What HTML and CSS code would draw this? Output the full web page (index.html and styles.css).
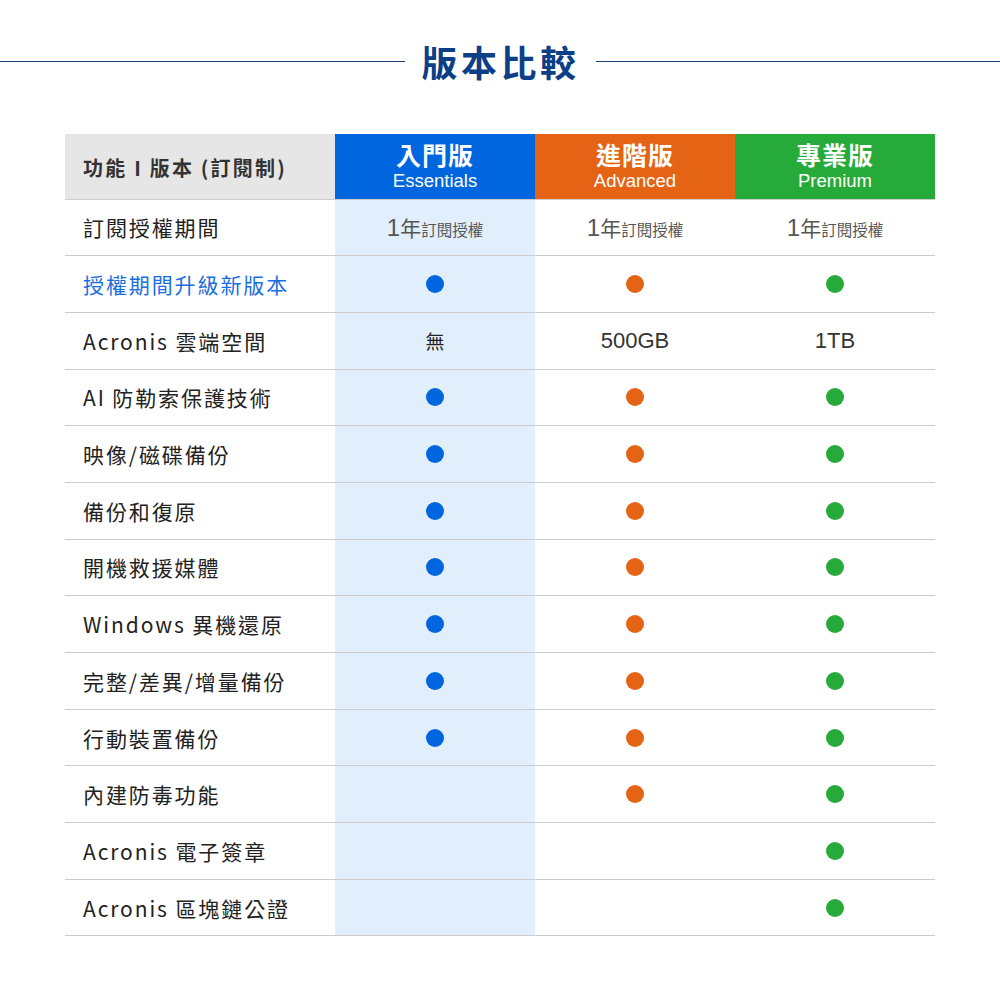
FILE: index.html
```html
<!DOCTYPE html>
<html lang="zh-Hant">
<head>
<meta charset="utf-8">
<link rel="stylesheet" href="styles.css">
</head>
<body>
<div class="title-bar">
  <span class="line"></span>
  <h1 class="title">版本比較</h1>
  <span class="line"></span>
</div>
<div class="table">
  <div class="row head">
    <div class="cell label">功能 I 版本 (訂閱制)</div>
    <div class="cell plan blue"><span class="pname">入門版</span><span class="psub">Essentials</span></div>
    <div class="cell plan orange"><span class="pname">進階版</span><span class="psub">Advanced</span></div>
    <div class="cell plan green"><span class="pname">專業版</span><span class="psub">Premium</span></div>
  </div>
  <div class="row">
    <div class="cell label">訂閱授權期間</div>
    <div class="cell ess"><span class="yr">1<span class="nian">年</span><span class="small">訂閱授權</span></span></div>
    <div class="cell"><span class="yr">1<span class="nian">年</span><span class="small">訂閱授權</span></span></div>
    <div class="cell"><span class="yr">1<span class="nian">年</span><span class="small">訂閱授權</span></span></div>
  </div>
  <div class="row">
    <div class="cell label link">授權期間升級新版本</div>
    <div class="cell ess"><span class="dot d-blue"></span></div>
    <div class="cell"><span class="dot d-orange"></span></div>
    <div class="cell"><span class="dot d-green"></span></div>
  </div>
  <div class="row">
    <div class="cell label">Acronis 雲端空間</div>
    <div class="cell ess"><span class="cjk">無</span></div>
    <div class="cell"><span class="val">500GB</span></div>
    <div class="cell"><span class="val">1TB</span></div>
  </div>
  <div class="row">
    <div class="cell label">AI 防勒索保護技術</div>
    <div class="cell ess"><span class="dot d-blue"></span></div>
    <div class="cell"><span class="dot d-orange"></span></div>
    <div class="cell"><span class="dot d-green"></span></div>
  </div>
  <div class="row">
    <div class="cell label">映像/磁碟備份</div>
    <div class="cell ess"><span class="dot d-blue"></span></div>
    <div class="cell"><span class="dot d-orange"></span></div>
    <div class="cell"><span class="dot d-green"></span></div>
  </div>
  <div class="row">
    <div class="cell label">備份和復原</div>
    <div class="cell ess"><span class="dot d-blue"></span></div>
    <div class="cell"><span class="dot d-orange"></span></div>
    <div class="cell"><span class="dot d-green"></span></div>
  </div>
  <div class="row">
    <div class="cell label">開機救援媒體</div>
    <div class="cell ess"><span class="dot d-blue"></span></div>
    <div class="cell"><span class="dot d-orange"></span></div>
    <div class="cell"><span class="dot d-green"></span></div>
  </div>
  <div class="row">
    <div class="cell label">Windows 異機還原</div>
    <div class="cell ess"><span class="dot d-blue"></span></div>
    <div class="cell"><span class="dot d-orange"></span></div>
    <div class="cell"><span class="dot d-green"></span></div>
  </div>
  <div class="row">
    <div class="cell label">完整/差異/增量備份</div>
    <div class="cell ess"><span class="dot d-blue"></span></div>
    <div class="cell"><span class="dot d-orange"></span></div>
    <div class="cell"><span class="dot d-green"></span></div>
  </div>
  <div class="row">
    <div class="cell label">行動裝置備份</div>
    <div class="cell ess"><span class="dot d-blue"></span></div>
    <div class="cell"><span class="dot d-orange"></span></div>
    <div class="cell"><span class="dot d-green"></span></div>
  </div>
  <div class="row">
    <div class="cell label">內建防毒功能</div>
    <div class="cell ess"></div>
    <div class="cell"><span class="dot d-orange"></span></div>
    <div class="cell"><span class="dot d-green"></span></div>
  </div>
  <div class="row">
    <div class="cell label">Acronis 電子簽章</div>
    <div class="cell ess"></div>
    <div class="cell"></div>
    <div class="cell"><span class="dot d-green"></span></div>
  </div>
  <div class="row">
    <div class="cell label">Acronis 區塊鏈公證</div>
    <div class="cell ess"></div>
    <div class="cell"></div>
    <div class="cell"><span class="dot d-green"></span></div>
  </div>
</div>
</body>
</html>
```

FILE: styles.css
```css
* { box-sizing: border-box; }
body {
  margin: 0;
  background: #fff;
  font-family: "Noto Sans CJK TC", "Noto Sans", sans-serif;
  color: #222;
}
.title-bar {
  display: flex;
  align-items: center;
  height: 50px;
  margin-top: 36px;
}
.line {
  flex: 1;
  height: 1px;
  background: #1b3f78;
}
.title {
  margin: 0 16px 0 17px;
  font-size: 36px;
  font-weight: 700;
  letter-spacing: 3.5px;
  line-height: 50px;
  color: #0d3f86;
}
.table {
  width: 870px;
  margin: 48px 0 0 65px;
}
.row {
  display: grid;
  grid-template-columns: 270px 200px 200px 200px;
  height: 56.7px;
  border-bottom: 1px solid #cccccc;
}
.row.head {
  height: 65.5px;
}
.cell {
  display: flex;
  align-items: center;
  justify-content: center;
}
.cell.label {
  justify-content: flex-start;
  padding-left: 18px;
  font-size: 21px;
  letter-spacing: 1.9px;
  color: #222;
}
.cell.label.link { color: #1a6fe0; }
.head .cell.label {
  background: #e6e6e6;
  font-weight: 700;
  font-size: 20px;
  letter-spacing: 2.2px;
  color: #333;
  padding-top: 2px;
}
.plan {
  flex-direction: column;
  color: #fff;
}
.pname {
  font-size: 25px;
  font-weight: 700;
  line-height: 30px;
  letter-spacing: 1px;
  margin-top: -2px;
}
.psub {
  font-family: "Liberation Sans", Arial, sans-serif;
  font-size: 18.5px;
  line-height: 21px;
  margin-top: 1px;
}
.blue { background: #0066e0; }
.orange { background: #e46314; }
.green { background: #26aa3a; }
.ess { background: #e1effc; }
.dot {
  width: 18px;
  height: 18px;
  border-radius: 50%;
}
.d-blue { background: #0066e0; }
.d-orange { background: #e46314; }
.d-green { background: #26aa3a; }
.yr {
  font-family: "Liberation Sans", Arial, sans-serif;
  font-size: 24px;
  color: #555;
  display: flex;
  align-items: baseline;
}
.nian {
  font-family: "Noto Sans CJK TC", sans-serif;
  font-size: 21px;
}
.small {
  font-family: "Noto Sans CJK TC", sans-serif;
  font-size: 15.5px;
}
.cjk {
  font-size: 19px;
  color: #222;
}
.val {
  font-family: "Liberation Sans", Arial, sans-serif;
  font-size: 22px;
  color: #333;
}
```
